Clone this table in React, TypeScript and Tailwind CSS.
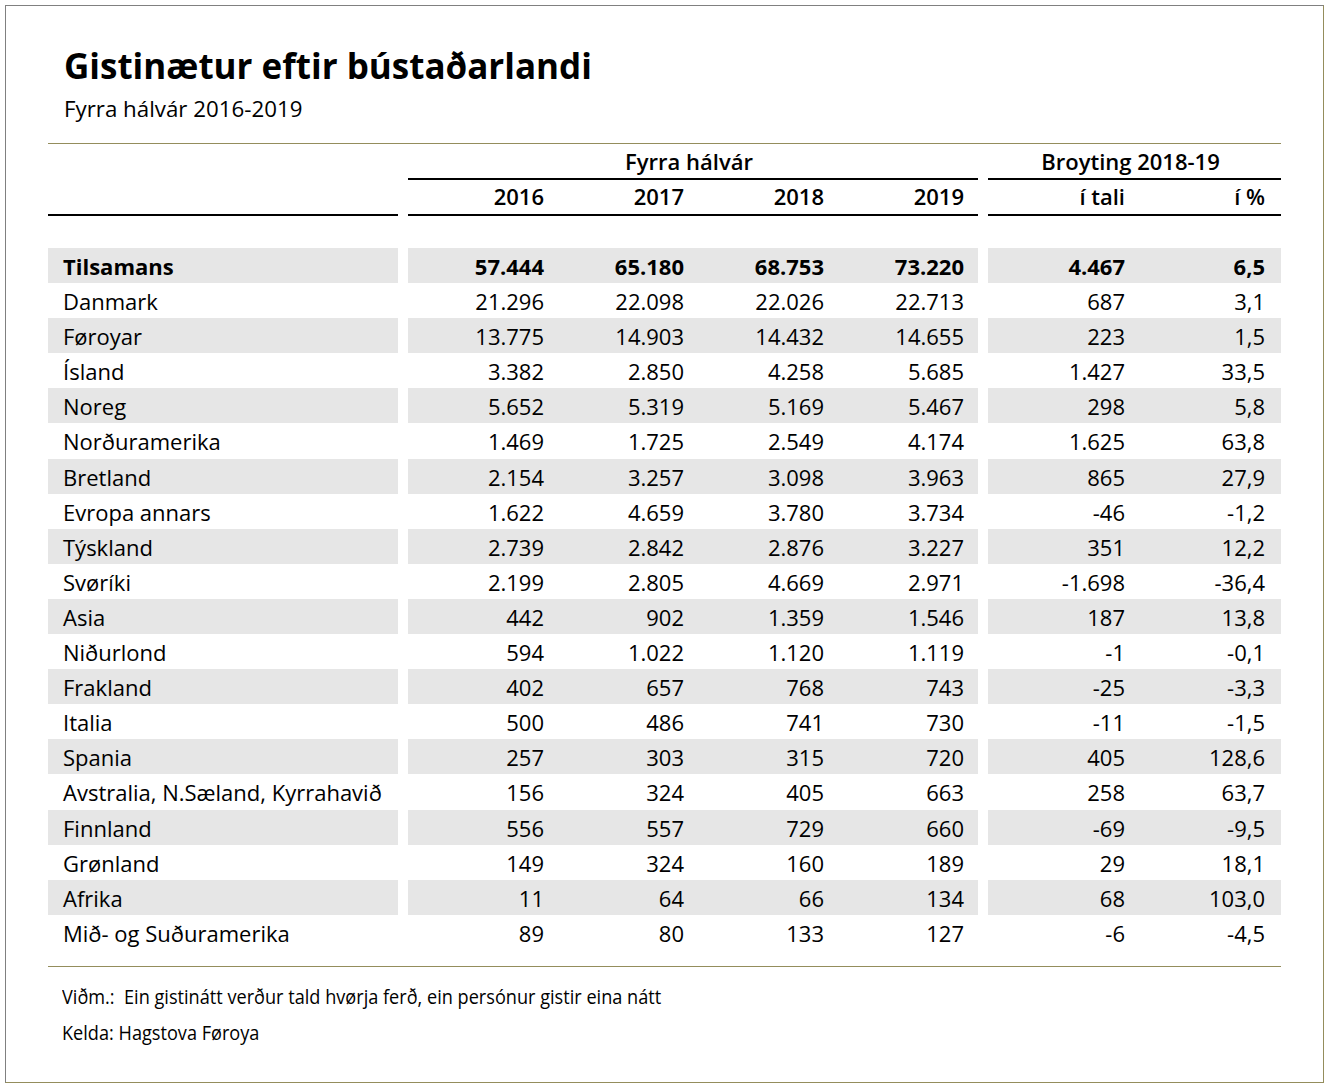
import React from "react";

const rows: [string, string, string, string, string, string, string][] = [
  ["Tilsamans", "57.444", "65.180", "68.753", "73.220", "4.467", "6,5"],
  ["Danmark", "21.296", "22.098", "22.026", "22.713", "687", "3,1"],
  ["Føroyar", "13.775", "14.903", "14.432", "14.655", "223", "1,5"],
  ["Ísland", "3.382", "2.850", "4.258", "5.685", "1.427", "33,5"],
  ["Noreg", "5.652", "5.319", "5.169", "5.467", "298", "5,8"],
  ["Norðuramerika", "1.469", "1.725", "2.549", "4.174", "1.625", "63,8"],
  ["Bretland", "2.154", "3.257", "3.098", "3.963", "865", "27,9"],
  ["Evropa annars", "1.622", "4.659", "3.780", "3.734", "-46", "-1,2"],
  ["Týskland", "2.739", "2.842", "2.876", "3.227", "351", "12,2"],
  ["Svøríki", "2.199", "2.805", "4.669", "2.971", "-1.698", "-36,4"],
  ["Asia", "442", "902", "1.359", "1.546", "187", "13,8"],
  ["Niðurlond", "594", "1.022", "1.120", "1.119", "-1", "-0,1"],
  ["Frakland", "402", "657", "768", "743", "-25", "-3,3"],
  ["Italia", "500", "486", "741", "730", "-11", "-1,5"],
  ["Spania", "257", "303", "315", "720", "405", "128,6"],
  ["Avstralia, N.Sæland, Kyrrahavið", "156", "324", "405", "663", "258", "63,7"],
  ["Finnland", "556", "557", "729", "660", "-69", "-9,5"],
  ["Grønland", "149", "324", "160", "189", "29", "18,1"],
  ["Afrika", "11", "64", "66", "134", "68", "103,0"],
  ["Mið- og Suðuramerika", "89", "80", "133", "127", "-6", "-4,5"],
];

export default function App() {
  return (
    <div
      className="w-[1328px] h-[1088px] bg-white pt-[5px] pl-[5px] text-black"
      style={{ fontFamily: '"Open Sans", "Noto Sans", sans-serif' }}
    >
      <div className="w-[1319px] h-[1078px] border border-t-[#808080] border-l-[#808080] border-r-[#948d5c] border-b-[#948d5c] px-[42px] pt-[36px]">
        <div className="pl-[16px] text-[35px] leading-[48px] font-bold">
          Gistinætur eftir bústaðarlandi
        </div>
        <div className="pl-[16px] mt-[4px] text-[22.3px] leading-[30px]">
          Fyrra hálvár 2016-2019
        </div>
        <div className="mt-[19px] border-t border-[#948d5c]" />
        {/* header row 1 */}
        <div className="flex h-[36px] text-[22px] font-semibold">
          <div className="w-[350px]" />
          <div className="w-[10px]" />
          <div className="w-[570px] border-b-2 border-black flex items-center justify-center pr-[8px]">
            Fyrra hálvár
          </div>
          <div className="w-[10px]" />
          <div className="w-[293px] border-b-2 border-black flex items-center justify-center pr-[8px]">
            Broyting 2018-19
          </div>
        </div>
        {/* header row 2 */}
        <div className="flex h-[36px] text-[22px] font-semibold">
          <div className="w-[350px] border-b-2 border-black" />
          <div className="w-[10px]" />
          <div className="w-[570px] border-b-2 border-black flex">
            {["2016", "2017", "2018", "2019"].map((y, i) => (
              <div
                key={y}
                className={`${i === 0 ? "w-[150px]" : "w-[140px]"} pr-[14px] text-right leading-[33px]`}
              >
                {y}
              </div>
            ))}
          </div>
          <div className="w-[10px]" />
          <div className="w-[293px] border-b-2 border-black flex">
            <div className="w-[153px] pr-[16px] text-right leading-[33px]">í tali</div>
            <div className="w-[140px] pr-[16px] text-right leading-[33px]">í %</div>
          </div>
        </div>
        <div className="h-[32px]" />
        {rows.map((r, idx) => {
          const bg = idx % 2 === 0 ? "bg-[#e6e6e6]" : "bg-white";
          const fw = idx === 0 ? "font-bold" : "";
          return (
            <div key={r[0]} className={`flex h-[35.1px] text-[22px] leading-[36px] ${fw}`}>
              <div className={`w-[350px] pl-[15px] ${bg}`}>{r[0]}</div>
              <div className="w-[10px]" />
              <div className={`w-[570px] flex ${bg}`}>
                {[r[1], r[2], r[3], r[4]].map((v, i) => (
                  <div
                    key={i}
                    className={`${i === 0 ? "w-[150px]" : "w-[140px]"} pr-[14px] text-right`}
                  >
                    {v}
                  </div>
                ))}
              </div>
              <div className="w-[10px]" />
              <div className={`w-[293px] flex ${bg}`}>
                <div className="w-[153px] pr-[16px] text-right">{r[5]}</div>
                <div className="w-[140px] pr-[16px] text-right">{r[6]}</div>
              </div>
            </div>
          );
        })}
        <div className="mt-[16px] border-t border-[#948d5c]" />
        <div className="pl-[14px] pt-[12px] text-[19.5px] leading-[36px]">
          <div className="origin-left scale-x-[0.93] whitespace-nowrap">
            Viðm.:&nbsp; Ein gistinátt verður tald hvørja ferð, ein persónur gistir eina nátt
          </div>
          <div className="origin-left scale-x-[0.93] whitespace-nowrap">Kelda: Hagstova Føroya</div>
        </div>
      </div>
    </div>
  );
}
